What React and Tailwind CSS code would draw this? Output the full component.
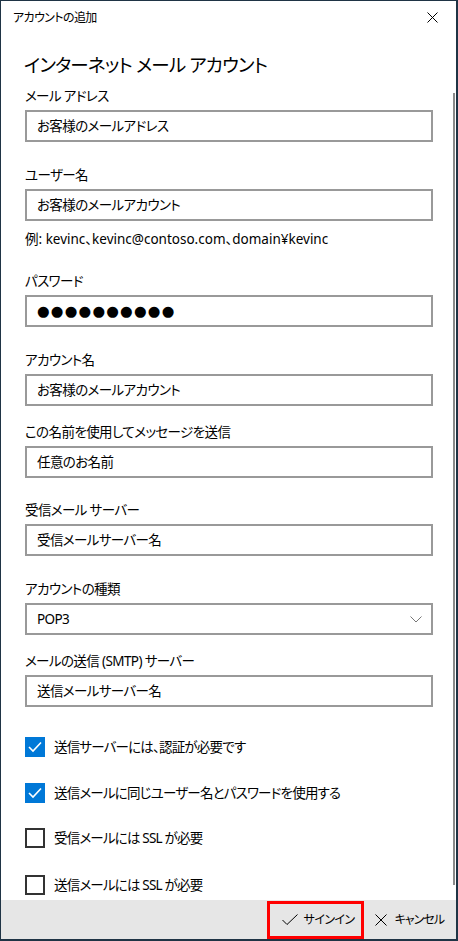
import * as React from 'react';

const fields = [
  { label: 'メール アドレス', value: 'お客様のメールアドレス', mt: 'mt-[7px]' },
  { label: 'ユーザー名', value: 'お客様のメールアカウント', mt: 'mt-[23px]', hint: '例: kevinc、kevinc@contoso.com、domain¥kevinc' },
  { label: 'パスワード', value: '●●●●●●●●●●', mt: 'mt-[22px]', password: true },
  { label: 'アカウント名', value: 'お客様のメールアカウント', mt: 'mt-[23px]' },
  { label: 'この名前を使用してメッセージを送信', value: '任意のお名前', mt: 'mt-[16px]' },
  { label: '受信メール サーバー', value: '受信メールサーバー名', mt: 'mt-[22px]' },
  { label: 'アカウントの種類', value: 'POP3', mt: 'mt-[23px]', select: true },
  { label: 'メールの送信 (SMTP) サーバー', value: '送信メールサーバー名', mt: 'mt-[16px]' },
];

const checks = [
  { label: '送信サーバーには、認証が必要です', checked: true, mt: 'mt-[30px]' },
  { label: '送信メールに同じユーザー名とパスワードを使用する', checked: true, mt: 'mt-[26px]' },
  { label: '受信メールには SSL が必要', checked: false, mt: 'mt-[25px]' },
  { label: '送信メールには SSL が必要', checked: false, mt: 'mt-[27px]' },
];

function Field({ label, value, mt, hint, password, select }) {
  return (
    <div className={mt}>
      <div className="h-[20px] leading-[20px] text-[13.5px] tracking-[-0.6px] text-black whitespace-nowrap">{label}</div>
      <div className="mt-1 h-8 w-[408px] border-2 border-[#999999] bg-white flex items-center pl-[10px] pr-[8px]">
        {password ? (
          <span className="text-[14.5px] tracking-[1.2px] leading-none text-black font-['DejaVu_Sans',sans-serif]">{value}</span>
        ) : (
          <span className="text-[13.5px] tracking-[-0.6px] text-black flex-1 whitespace-nowrap">{value}</span>
        )}
        {select && (
          <svg width="12" height="7" viewBox="0 0 12 7" className="mr-[1px]">
            <polyline points="0.5,0.5 6,6 11.5,0.5" fill="none" stroke="#777" strokeWidth="1" />
          </svg>
        )}
      </div>
      {hint && <div className="mt-[8px] h-[20px] leading-[20px] text-[13.5px] text-black whitespace-nowrap">{hint}</div>}
    </div>
  );
}

function Check({ label, checked, mt }) {
  return (
    <div className={`${mt} flex items-center h-[20px]`}>
      {checked ? (
        <div className="w-5 h-5 shrink-0 bg-[#0078d7] flex items-center justify-center">
          <svg width="20" height="20" viewBox="0 0 20 20">
            <polyline points="4,10 8,14 16,5.5" fill="none" stroke="#fff" strokeWidth="1.6" />
          </svg>
        </div>
      ) : (
        <div className="w-5 h-5 shrink-0 border-2 border-[#333333] bg-white" />
      )}
      <span className="ml-[9px] text-[13.5px] tracking-[-0.8px] leading-[20px] text-black whitespace-nowrap">{label}</span>
    </div>
  );
}

export default function App() {
  return (
    <div className="w-[458px] h-[941px] bg-white border-t border-l border-r-2 border-b-2 border-[#1f3445] flex flex-col font-['Noto_Sans','Noto_Sans_CJK_JP',sans-serif] [font-feature-settings:'palt'] overflow-hidden">
      <div className="relative flex-1 overflow-hidden">
        <div className="h-[33px] flex items-center justify-between pl-[12px] pr-[18px]">
          <span className="text-[12px] tracking-[-0.6px] text-black">アカウントの追加</span>
          <svg width="11" height="11" viewBox="0 0 11 11">
            <path d="M0.5 0.5 L10.5 10.5 M10.5 0.5 L0.5 10.5" stroke="#000" strokeWidth="1" />
          </svg>
        </div>
        <div className="pl-[24px]">
          <h1 className="mt-[17px] h-[28px] leading-[28px] text-[18.5px] tracking-[-0.8px] font-normal text-black -ml-px whitespace-nowrap">インターネット メール アカウント</h1>
          {fields.map((f) => (
            <Field key={f.label} {...f} />
          ))}
          {checks.map((c) => (
            <Check key={c.label} {...c} />
          ))}
        </div>
        <div className="absolute right-px top-[92px] w-[2px] h-[792px] bg-[#8a8a8a]" />
      </div>
      <div className="h-[39px] shrink-0 bg-[#e6e6e6] flex items-center justify-end pr-[12px]">
        <div className="h-[38px] w-[97px] shrink-0 border-[3px] border-[#ff0000] flex items-center pl-[12px] mt-[1px]">
          <svg width="16" height="12" viewBox="0 0 16 12" className="shrink-0">
            <polyline points="0.5,6 5,10.5 15.5,0.5" fill="none" stroke="#000" strokeWidth="1" />
          </svg>
          <span className="ml-[6px] text-[12px] tracking-[-0.6px] text-black whitespace-nowrap">サインイン</span>
        </div>
        <div className="flex items-center ml-[11px]">
          <svg width="12" height="12" viewBox="0 0 12 12" className="shrink-0">
            <path d="M0.5 0.5 L11.5 11.5 M11.5 0.5 L0.5 11.5" stroke="#000" strokeWidth="1" />
          </svg>
          <span className="ml-[8px] text-[12px] tracking-[-1px] text-black whitespace-nowrap">キャンセル</span>
        </div>
      </div>
    </div>
  );
}
